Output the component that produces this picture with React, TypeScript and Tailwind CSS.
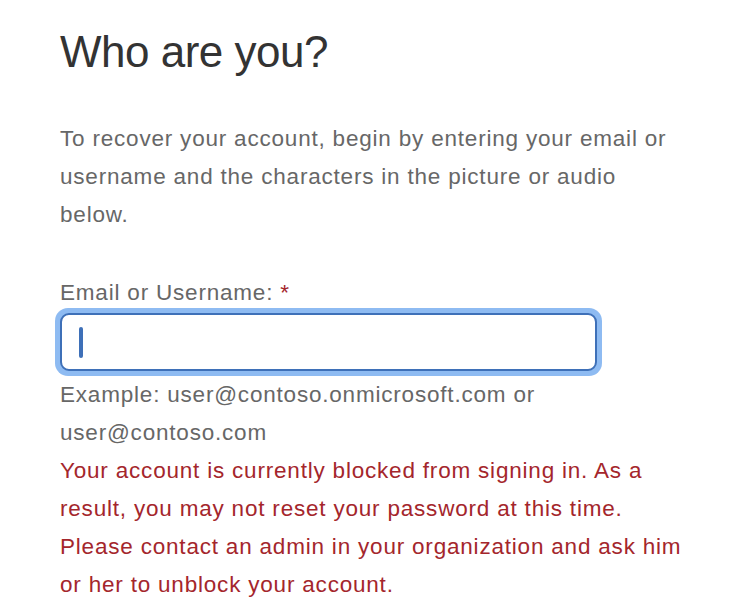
import React from "react";

export default function App() {
  const body = "text-[22.5px] leading-[38px] tracking-[0.8px]";
  return (
    <div
      className="w-[749px] h-[605px] bg-white overflow-hidden pl-[60px]"
      style={{ fontFamily: '"Liberation Sans", Arial, sans-serif' }}
    >
      <h1 className="text-[44px] leading-[50px] text-[#333333] pt-[27px] font-normal tracking-[-0.5px]">Who are you?</h1>
      <p className={`mt-[43px] w-[615px] text-[#676767] ${body}`}>
        To recover your account, begin by entering your email or username and the characters in the picture or audio below.
      </p>
      <div className={`mt-[40px] text-[#676767] ${body}`}>
        Email or Username: <span className="text-[#a4262c]">*</span>
      </div>
      <div className="-mt-[4px] -ml-[5px] w-[547px] h-[68px] rounded-[13px] bg-[#8ebbf2] p-[5px]">
        <div className="w-full h-full rounded-[9px] border-2 border-[#3e70b8] bg-white flex items-center pl-[17px]">
          <div className="w-[4px] h-[31px] rounded-full bg-[#3e70b8]" />
        </div>
      </div>
      <div className={`w-[636px] text-[#676767] ${body}`}>
        Example: user@contoso.onmicrosoft.com or user@contoso.com
      </div>
      <div className={`w-[636px] text-[#a4262c] ${body}`}>
        Your account is currently blocked from signing in. As a result, you may not reset your password at this time. Please contact an admin in your organization and ask him or her to unblock your account.
      </div>
    </div>
  );
}
